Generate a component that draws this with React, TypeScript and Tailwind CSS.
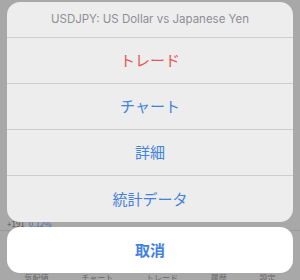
import React from 'react'

const font = { fontFamily: '"Noto Sans CJK JP", "Noto Sans", sans-serif' }

const actions = [
  { label: 'トレード', color: 'text-[#e4574f]' },
  { label: 'チャート', color: 'text-[#4382da]' },
  { label: '詳細', color: 'text-[#4382da]' },
  { label: '統計データ', color: 'text-[#4382da]' },
]

const tabs = ['気配値', 'チャート', 'トレード', '履歴', '設定']

export default function App() {
  return (
    <div className="relative w-[300px] h-[280px] overflow-hidden bg-[#a8a8a8]" style={font}>
      {/* dimmed screen behind the sheet */}
      <div className="flex flex-col h-full">
        <div className="h-[219px]" />
        <div className="flex items-center gap-1 px-[7px] text-[8px] leading-[10px] text-[#555]">
          <span>+191</span>
          <span className="text-[#4a6fa8]">0.12%</span>
        </div>
        <div className="h-px bg-[#999] mt-[1px]" />
        <div className="flex-1" />
        <div className="flex justify-around px-2 text-[8px] leading-[8px] text-[#666] translate-y-[2px]">
          {tabs.map((t) => (
            <span key={t}>{t}</span>
          ))}
        </div>
      </div>

      {/* action sheet */}
      <div className="absolute inset-0 flex flex-col px-[7px] pt-[2px]">
        <div className="flex flex-col rounded-[13px] bg-[#ededee] overflow-hidden">
          <div
            className="h-[35px] flex items-center justify-center text-[11.5px] text-[#8e8e93]"
            style={{ fontFamily: 'Inter, "Noto Sans", sans-serif' }}
          >
            USDJPY: US Dollar vs Japanese Yen
          </div>
          {actions.map((a, i) => (
            <div
              key={a.label}
              className={`flex items-center justify-center border-t border-[#cdcdd0] text-[15px] ${a.color} ${
                i === actions.length - 1 ? 'h-[47px]' : 'h-[46px]'
              }`}
            >
              {a.label}
            </div>
          ))}
        </div>
        <div className="mt-[5px] h-[46px] rounded-[13px] bg-white flex items-center justify-center text-[15px] font-bold text-[#4382da]">
          取消
        </div>
      </div>
    </div>
  )
}
